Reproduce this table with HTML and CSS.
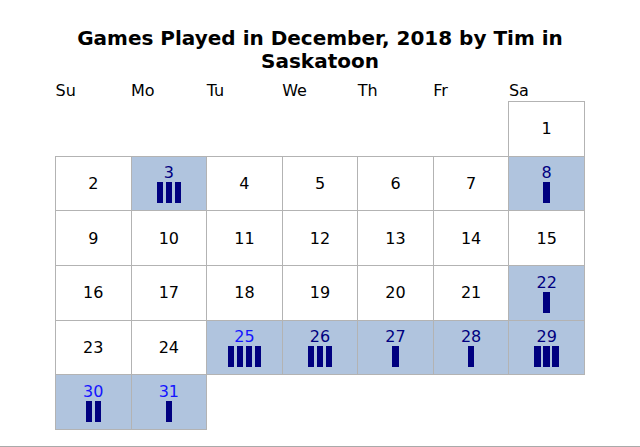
FILE: index.html
```html
<!DOCTYPE html>
<html>
<head>
<meta charset="utf-8">
<title>Games Played in December, 2018</title>
<link rel="stylesheet" href="styles.css">
</head>
<body>
<div class="page">
  <h1 class="title">Games Played in December, 2018 by Tim in Saskatoon</h1>
  <table class="cal">
    <thead>
      <tr><th>Su</th><th>Mo</th><th>Tu</th><th>We</th><th>Th</th><th>Fr</th><th>Sa</th></tr>
    </thead>
    <tbody>
      <tr>
        <td class="empty"></td><td class="empty"></td><td class="empty"></td><td class="empty"></td><td class="empty"></td><td class="empty"></td>
        <td class="day">1</td>
      </tr>
      <tr>
        <td class="day">2</td>
        <td class="day played"><span class="num">3</span><span class="bars"><i></i><i></i><i></i></span></td>
        <td class="day">4</td><td class="day">5</td><td class="day">6</td><td class="day">7</td>
        <td class="day played"><span class="num">8</span><span class="bars"><i></i></span></td>
      </tr>
      <tr>
        <td class="day">9</td><td class="day">10</td><td class="day">11</td><td class="day">12</td><td class="day">13</td><td class="day">14</td><td class="day">15</td>
      </tr>
      <tr>
        <td class="day">16</td><td class="day">17</td><td class="day">18</td><td class="day">19</td><td class="day">20</td><td class="day">21</td>
        <td class="day played"><span class="num">22</span><span class="bars"><i></i></span></td>
      </tr>
      <tr>
        <td class="day">23</td><td class="day">24</td>
        <td class="day played fresh"><span class="num">25</span><span class="bars"><i></i><i></i><i></i><i></i></span></td>
        <td class="day played"><span class="num">26</span><span class="bars"><i></i><i></i><i></i></span></td>
        <td class="day played"><span class="num">27</span><span class="bars"><i></i></span></td>
        <td class="day played"><span class="num">28</span><span class="bars"><i></i></span></td>
        <td class="day played"><span class="num">29</span><span class="bars"><i></i><i></i><i></i></span></td>
      </tr>
      <tr>
        <td class="day played fresh"><span class="num">30</span><span class="bars"><i></i><i></i></span></td>
        <td class="day played fresh"><span class="num">31</span><span class="bars"><i></i></span></td>
        <td class="empty"></td><td class="empty"></td><td class="empty"></td><td class="empty"></td><td class="empty"></td>
      </tr>
    </tbody>
  </table>
</div>
<div class="rule"></div>
</body>
</html>
```
FILE: styles.css
```css
html, body {
  margin: 0;
  padding: 0;
  background: #ffffff;
}
body {
  font-family: "DejaVu Sans", Verdana, sans-serif;
  color: #000000;
}
.page {
  width: 530px;
  margin: 0 auto;
  padding-top: 27px;
}
.title {
  margin: 0 0 9px 0;
  font-size: 20px;
  line-height: 23px;
  font-weight: bold;
  text-align: center;
}
.cal {
  width: 530px;
  border-collapse: collapse;
  table-layout: fixed;
}
.cal th {
  font-weight: normal;
  text-align: left;
  font-size: 16px;
  line-height: 18px;
  padding: 0 0 1px 0;
}
.cal tbody tr {
  height: 54.67px;
}
.cal td {
  padding: 0;
  text-align: center;
  vertical-align: middle;
  font-size: 16px;
  line-height: 19px;
}
.cal td.day {
  border: 1px solid #b3b3b3;
}
.cal td.empty {
  border: none;
}
.cal td.played {
  background: #b0c4de;
}
.num {
  display: block;
  color: #000080;
  line-height: 19px;
}
.fresh .num {
  color: #1515ff;
}
.bars {
  display: flex;
  justify-content: center;
  gap: 2.5px;
  height: 21px;
}
.bars i {
  display: block;
  width: 6.5px;
  background: #000080;
}
.rule {
  margin-top: 16px;
  border-top: 1px solid #aaaaaa;
}
```
